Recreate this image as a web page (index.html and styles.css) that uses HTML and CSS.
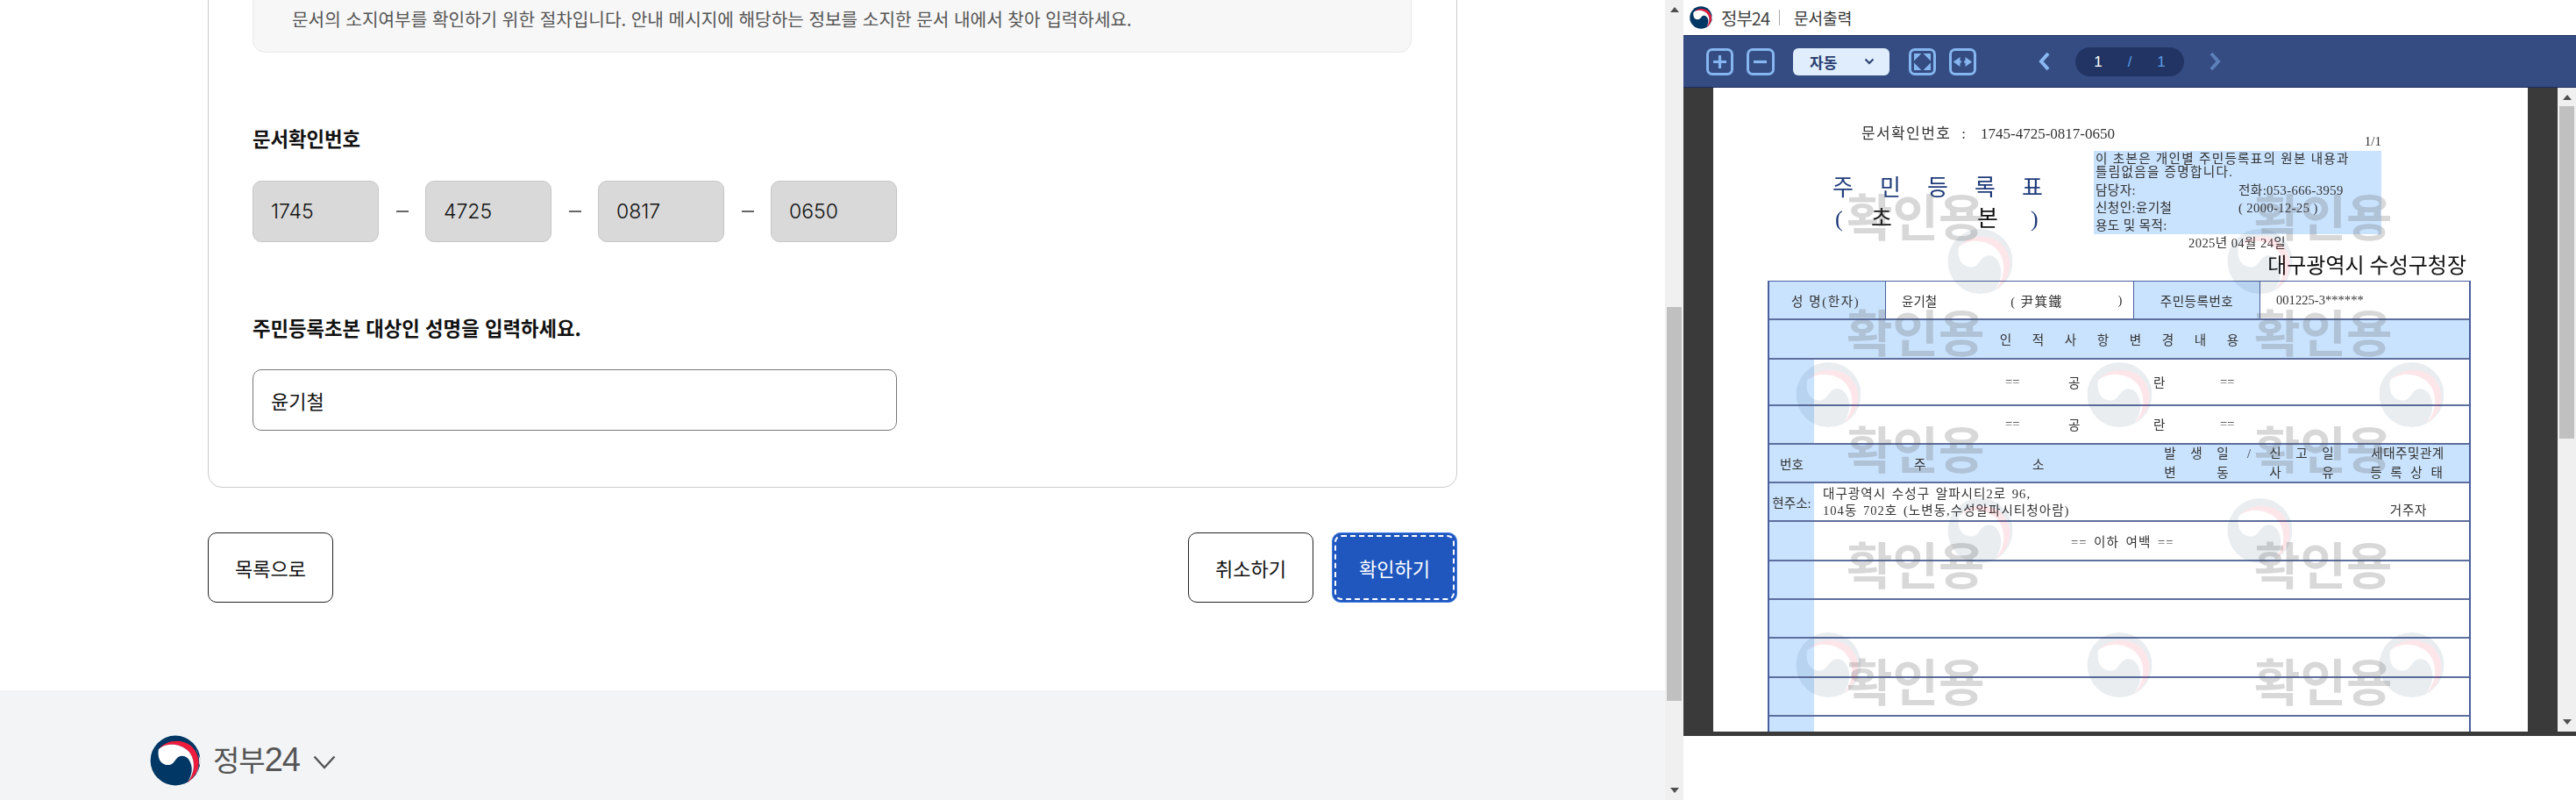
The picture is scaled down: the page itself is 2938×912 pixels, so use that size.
FILE: index.html
```html
<!DOCTYPE html>
<html lang="ko">
<head>
<meta charset="utf-8">
<title>문서확인</title>
<link rel="stylesheet" href="styles.css">
</head>
<body>
<svg class="defs" width="0" height="0" aria-hidden="true">
  <defs>
    <symbol id="taegeuk" viewBox="0 0 100 100">
      <circle cx="50" cy="50" r="50" fill="#fff"/>
      <circle cx="50" cy="50" r="49" fill="#003764"/>
      <path fill="#fff" d="M73 97C96 82 104 50 90 26L100 50 88 84Z"/>
      <path fill="#ed1c3c" d="M17 28C32 9 62 6 82 22 100 40 104 72 73 94 90 74 90 48 76 32 60 16 32 14 17 28Z"/>
      <path fill="#fff" d="M17 28C32 14 60 16 76 32 90 48 90 74 73 94 82 80 84 68 81 58 78 46 70 40 62 41 52 42 50 52 44 56 36 62 22 58 18 46 16 40 16 34 17 28Z"/>
    </symbol>
    <mask id="wm-cut">
      <rect width="100" height="100" fill="#fff"/>
      <path fill="#000" d="M17 28C32 9 62 6 82 22 100 40 104 72 73 94 82 80 84 68 81 58 78 46 70 40 62 41 52 42 50 52 44 56 36 62 22 58 18 46 16 40 16 34 17 28Z"/>
    </mask>
    <symbol id="wm-seal" viewBox="0 0 100 100">
      <circle cx="50" cy="50" r="50" fill="#1d4468" opacity=".09" mask="url(#wm-cut)"/>
      <path fill="#ed1c3c" opacity=".11" d="M17 28C32 9 62 6 82 22 100 40 104 72 73 94 90 74 90 48 76 32 60 16 32 14 17 28Z"/>
    </symbol>
  </defs>
</svg>

<div class="app">
  <section class="site">
    <div class="site-scroll">
      <main class="site-main">
        <div class="card">
          <div class="notice">문서의 소지여부를 확인하기 위한 절차입니다. 안내 메시지에 해당하는 정보를 소지한 문서 내에서 찾아 입력하세요.</div>
          <h2 class="field-label">문서확인번호</h2>
          <div class="code-row">
            <div class="code-box">1745</div><span class="code-dash"></span>
            <div class="code-box">4725</div><span class="code-dash"></span>
            <div class="code-box">0817</div><span class="code-dash"></span>
            <div class="code-box">0650</div>
          </div>
          <h2 class="field-label second">주민등록초본 대상인 성명을 입력하세요.</h2>
          <div class="name-input">윤기철</div>
        </div>
        <div class="actions">
          <button class="btn" type="button">목록으로</button>
          <div class="actions-right">
            <button class="btn" type="button">취소하기</button>
            <button class="btn btn-primary" type="button"><span class="focus-ring">확인하기</span></button>
          </div>
        </div>
      </main>
      <footer class="site-footer">
        <svg class="footer-logo"><use href="#taegeuk"/></svg>
        <span class="footer-name"><span class="footer-ko">정부</span>24</span>
        <svg class="footer-chevron" viewBox="0 0 26 16"><path d="M1.5 1.5 13 14 24.5 1.5" fill="none" stroke="#555" stroke-width="2.4"/></svg>
      </footer>
    </div>
    <div class="scrollbar">
      <span class="arrow-up"></span>
      <div class="scroll-space main-space"><div class="thumb main-thumb"></div></div>
      <span class="arrow-down"></span>
    </div>
  </section>

  <section class="viewer">
    <header class="viewer-head">
      <svg class="head-logo"><use href="#taegeuk"/></svg>
      <span class="head-name">정부24</span>
      <span class="head-sep"></span>
      <span class="head-title">문서출력</span>
    </header>
    <div class="toolbar">
      <span class="tool"><svg viewBox="0 0 25 25"><path d="M12.5 5v15M5 12.5h15"/></svg></span>
      <span class="tool tool-minus"><svg viewBox="0 0 25 25"><path d="M5 12.5h15"/></svg></span>
      <span class="zoom-select"><b>자동</b><svg viewBox="0 0 12 8"><path d="M1.5 1.5 6 6l4.500-4.500"/></svg></span>
      <span class="tool tool-fit"><svg class="thin" viewBox="0 0 25 25"><path d="M4 9V4h5L4 9ZM21 9V4h-5l5 5ZM4 16v5h5l-5-5ZM21 16v5h-5l5-5Z"/></svg></span>
      <span class="tool tool-width"><svg class="thin" viewBox="0 0 25 25"><path d="M8.500 9 3.500 12.500l5 3.500ZM16.500 9l5 3.500-5 3.500Z"/><path d="M8 12.500h3M14 12.500h3"/></svg></span>
      <svg class="pager-arrow prev" viewBox="0 0 14 22"><path d="M11 2 3 11l8 9"/></svg>
      <div class="pager"><span class="cur">1</span><span class="of">/</span><span class="of">1</span></div>
      <svg class="pager-arrow next" viewBox="0 0 14 22"><path d="M3 2l8 9-8 9"/></svg>
    </div>
    <div class="stage">
      <div class="page">
        <div class="doc">
          <div class="doc-no-row">
            <span class="doc-no"><span class="doc-no-key">문서확인번호</span><span class="doc-no-colon">:</span><span>1745-4725-0817-0650</span></span>
            <span class="doc-pages">1/1</span>
          </div>
          <div class="doc-top">
            <div class="doc-title">
              <div class="title-main"><span>주</span><span>민</span><span>등</span><span>록</span><span>표</span></div>
              <div class="title-sub"><span class="paren">(</span><span class="kind">초</span><span class="kind">본</span><span class="paren">)</span></div>
            </div>
            <div class="cert">
              <div class="cert-line tight">이 초본은 개인별 주민등록표의 원본 내용과</div>
              <div class="cert-line tight">틀림없음을 증명합니다.</div>
              <div class="cert-pair first"><span>담당자:</span><span>전화:053-666-3959</span></div>
              <div class="cert-pair"><span>신청인:윤기철</span><span>( 2000-12-25 )</span></div>
              <div class="cert-pair"><span>용도 및 목적:</span><span></span></div>
            </div>
          </div>
          <div class="doc-date">2025년 04월 24일</div>
          <div class="doc-issuer">대구광역시 수성구청장</div>

          <div class="tbl">
            <div class="row row-id">
              <div class="c blue c-label">성 명(한자)</div>
              <div class="c c-name"><span>윤기철</span><span class="hanja">( 尹箕鐵</span><span class="close">)</span></div>
              <div class="c blue c-center">주민등록번호</div>
              <div class="c c-rrn">001225-3******</div>
            </div>
            <div class="row row-band blue">
              <span>인</span><span>적</span><span>사</span><span>항</span><span>변</span><span>경</span><span>내</span><span>용</span>
            </div>
            <div class="row row-tall row-side">
              <div class="side blue"></div>
              <div class="blank"><span>==</span><span>공</span><span>란</span><span>==</span></div>
            </div>
            <div class="row row-side">
              <div class="side blue"></div>
              <div class="blank"><span>==</span><span>공</span><span>란</span><span>==</span></div>
            </div>
            <div class="row row-head blue">
              <div class="h-no">번호</div>
              <div class="h-addr"><span>주</span><span>소</span></div>
              <div class="h-date">
                <span>발</span><span>생</span><span>일</span><span>/</span><span>신</span><span>고</span><span>일</span>
                <span>변</span><span></span><span>동</span><span></span><span>사</span><span></span><span>유</span>
              </div>
              <div class="h-status"><div>세대주및관계</div><div class="spaced">등 록 상 태</div></div>
            </div>
            <div class="row row-addr">
              <div class="side blue side-label">현주소:</div>
              <div class="addr-lines"><div>대구광역시 수성구 알파시티2로 96,</div><div>104동 702호 (노변동,수성알파시티청아람)</div></div>
              <div class="addr-status">거주자</div>
            </div>
            <div class="row row-side">
              <div class="side blue"></div>
              <div class="end-mark">== 이하 여백 ==</div>
            </div>
            <div class="row row-side"><div class="side blue"></div></div>
            <div class="row row-side"><div class="side blue"></div></div>
            <div class="row row-side"><div class="side blue"></div></div>
            <div class="row row-side"><div class="side blue"></div></div>
            <div class="row row-side"><div class="side blue"></div></div>
          </div>
        </div>

        <svg class="wm-seal s1"><use href="#wm-seal"/></svg>
        <svg class="wm-seal s2"><use href="#wm-seal"/></svg>
        <svg class="wm-seal s3"><use href="#wm-seal"/></svg>
        <svg class="wm-seal s4"><use href="#wm-seal"/></svg>
        <svg class="wm-seal s5"><use href="#wm-seal"/></svg>
        <svg class="wm-seal s6"><use href="#wm-seal"/></svg>
        <svg class="wm-seal s7"><use href="#wm-seal"/></svg>
        <svg class="wm-seal s8"><use href="#wm-seal"/></svg>
        <svg class="wm-seal s9"><use href="#wm-seal"/></svg>
        <svg class="wm-seal s10"><use href="#wm-seal"/></svg>
        <span class="wm w1">확인용</span><span class="wm w2">확인용</span>
        <span class="wm w3">확인용</span><span class="wm w4">확인용</span>
        <span class="wm w5">확인용</span><span class="wm w6">확인용</span>
        <span class="wm w7">확인용</span><span class="wm w8">확인용</span>
        <span class="wm w9">확인용</span><span class="wm w10">확인용</span>
      </div>
      <div class="dark-gutter"></div>
      <div class="scrollbar">
        <span class="arrow-up"></span>
        <div class="scroll-space"><div class="thumb pdf-thumb"></div></div>
        <span class="arrow-down"></span>
      </div>
    </div>
    <div class="stage-foot"></div>
  </section>
</div>
</body>
</html>
```

FILE: styles.css
```css
* { box-sizing: border-box; }
html, body { margin: 0; padding: 0; background: #fff; }
body { font-family: "Noto Sans CJK KR", "Noto Sans", sans-serif; color: #111; overflow: hidden; }
.defs { position: absolute; }
.app { display: flex; width: 2938px; height: 912px; overflow: hidden; }

/* left site */
.site { width: 1920px; height: 912px; display: flex; flex: none; }
.site-scroll { width: 1899px; height: 912px; overflow: hidden; flex: none; }
.site-main { padding: 0 237px; margin-top: -100px; width: 1899px; }
.card { width: 1425px; padding: 59px 51px 64px 50px; border: 1px solid #ccc; border-radius: 16px; }
.notice { height: 100px; background: #f7f7f7; border: 1px solid #e8e8e8; border-radius: 14px; padding: 46px 0 0 44px; font-size: 20.2px; line-height: 30px; color: #555; }
.field-label { margin: 82px 0 34px; font-size: 22.3px; line-height: 30px; font-weight: 700; color: #111; }
.field-label.second { margin-bottom: 33px; }
.code-row { display: flex; align-items: center; }
.code-box { width: 144px; height: 70px; background: #d9d9d9; border: 1px solid #c6c6c6; border-radius: 10px; padding-left: 20px; font-size: 23px; line-height: 68px; color: #111; font-family: "Inter", "Noto Sans CJK KR", sans-serif; font-weight: 300; }
.code-dash { width: 53px; display: flex; justify-content: center; }
.code-dash::before { content: ""; width: 14px; height: 2px; background: #666; }
.name-input { width: 735px; height: 70px; border: 1px solid #777; border-radius: 10px; padding-left: 20px; font-size: 22px; line-height: 68px; color: #111; }
.actions { width: 1425px; margin-top: 51px; display: flex; justify-content: space-between; }
.actions-right { display: flex; gap: 21px; }
.btn { width: 143px; height: 80px; padding: 0; background: #fff; border: 1px solid #222; border-radius: 10px; font: 400 22px "Noto Sans CJK KR", sans-serif; color: #111; }
.btn-primary { padding: 2px; background: #1f57bf; border-color: #3a78e0; color: #fff; }
.focus-ring { display: flex; align-items: center; justify-content: center; height: 100%; border: 2px dashed #fff; border-radius: 8px; }
.site-footer { margin-top: 100px; height: 125px; background: #f3f4f6; display: flex; align-items: center; padding: 35px 0 0 171px; }
.footer-logo { width: 58px; height: 58px; flex: none; }
.footer-name { margin-left: 14px; font-size: 38px; line-height: 50px; letter-spacing: -1px; color: #555; font-family: "Liberation Sans", "Noto Sans CJK KR", sans-serif; white-space: nowrap; }
.footer-ko { font-size: 33px; }
.footer-chevron { width: 26px; height: 16px; margin: 4px 0 0 15px; }

/* scrollbars */
.scrollbar { width: 21px; height: 100%; flex: none; background: #f0f0f0; display: flex; flex-direction: column; align-items: center; }
.arrow-up, .arrow-down { width: 0; height: 0; flex: none; border-left: 5px solid transparent; border-right: 5px solid transparent; }
.arrow-up { margin: 8px 0 7px; border-bottom: 6px solid #505050; }
.arrow-down { margin: 7px 0 8px; border-top: 6px solid #505050; }
.scroll-space { flex: 1; width: 17px; }
.thumb { width: 17px; background: #c0c0c0; }
.main-thumb { height: 449px; margin-top: 329px; }
.pdf-thumb { height: 379px; }

/* viewer */
.viewer { width: 1018px; flex: none; display: flex; flex-direction: column; }
.viewer-head { height: 40px; display: flex; align-items: center; padding-left: 7px; background: #fff; }
.head-logo { width: 26px; height: 26px; flex: none; }
.head-name { margin-left: 10px; font-size: 20px; letter-spacing: -1px; color: #444; }
.head-sep { width: 1px; height: 18px; margin: 0 16px 0 11px; background: #aaa; }
.head-title { font-size: 18px; color: #333; }
.toolbar { height: 60px; background: #344c82; border-top: 1px solid #1d2f60; border-bottom: 1px solid #1d2f60; display: flex; align-items: center; padding-left: 26px; flex: none; }
.tool { width: 31px; height: 31px; border: 3px solid #86b6f0; border-radius: 7px; display: flex; flex: none; }
.tool svg { width: 25px; height: 25px; fill: none; stroke: #86b6f0; stroke-width: 3.2; }
.tool svg.thin { stroke-width: 2; }
.tool-fit svg { fill: #86b6f0; stroke-width: 1; }
.tool-width svg { fill: #86b6f0; stroke-width: 1.6; }
.tool-minus { margin-left: 15px; width: 32px; }
.zoom-select { width: 110px; height: 31px; margin-left: 21px; background: #e0edfc; border-radius: 6px; display: flex; align-items: center; padding-left: 19px; }
.zoom-select b { font-size: 17px; line-height: 31px; font-weight: 700; color: #2b3f70; width: 57px; }
.zoom-select svg { width: 12px; height: 8px; margin-left: 5px; fill: none; stroke: #2b3f70; stroke-width: 2; }
.tool-fit { margin-left: 22px; }
.tool-width { margin-left: 15px; }
.pager-arrow { width: 14px; height: 22px; flex: none; fill: none; stroke-width: 4; }
.prev { margin-left: 71px; stroke: #8ab8f2; }
.next { margin-left: 28px; stroke: #5d7fb8; }
.pager { width: 124px; height: 33px; margin-left: 28px; border-radius: 17px; background: #223463; display: grid; grid-template-columns: repeat(3, 36px); justify-content: center; justify-items: center; font: 400 17px/33px "Liberation Sans", sans-serif; }
.cur { color: #fff; }
.of { color: #5c9be8; }

.stage { height: 734px; background: #3a3a3a; display: flex; justify-content: flex-end; flex: none; }
.stage-foot { height: 5px; background: #3a3a3a; flex: none; }
.page { position: relative; width: 929px; height: 734px; background: #fff; overflow: hidden; flex: none; }
.dark-gutter { width: 34px; flex: none; }

/* document */
.doc { width: 929px; padding-top: 43px; font-family: "Liberation Serif", "Noto Sans CJK KR", serif; font-size: 14.6px; color: #333; filter: blur(.35px); }
.doc-no-row { width: 762px; height: 29px; padding-left: 169px; display: flex; justify-content: space-between; }
.doc-no { font-size: 17px; line-height: 20px; display: flex; }
.doc-no-key { letter-spacing: 1.4px; }
.doc-no-colon { margin: 0 17px 0 12px; }
.doc-pages { font-size: 15px; line-height: 20px; margin-top: 8px; }
.doc-top { display: flex; height: 95px; }
.doc-title { width: 434px; padding: 25px 0 0 136px; color: #1f3a7a; }
.title-main { display: flex; font-size: 26px; line-height: 35px; }
.title-main span { width: 54px; }
.title-sub { display: flex; font-size: 26px; line-height: 35px; padding-left: 3px; }
.paren { width: 41px; }
.kind { color: #111; width: 121px; }
.kind + .kind { width: 61px; }
.cert { width: 328px; background: #c9e2fd; padding: 2px 0 0 2px; }
.cert-line.tight { line-height: 15px; height: 15px; letter-spacing: 1.3px; white-space: nowrap; }
.cert-pair { display: grid; grid-template-columns: 163px 1fr; height: 20px; line-height: 20px; white-space: nowrap; letter-spacing: .4px; }
.cert-pair.first { margin-top: 3px; }
.doc-date { height: 20px; line-height: 20px; margin-left: 542px; letter-spacing: .4px; }
.doc-issuer { height: 33px; line-height: 33px; padding-right: 70px; text-align: right; font-size: 24px; color: #111; }

.tbl { margin-left: 62px; width: 802px; border-left: 2px solid #4a5f9c; border-right: 2px solid #4a5f9c; border-top: 1px solid #4a5f9c; }
.row { height: 44.3px; border-bottom: 2px solid #5d6f9f; display: flex; align-items: center; }
.row-tall { height: 53px; }
.blue { background: #c9e2fd; }
.row-id { display: grid; grid-template-columns: 133px 283px 144px 1fr; align-items: stretch; }
.c { display: flex; align-items: center; border-right: 1px solid #4a5f9c; }
.c-label { padding-left: 25px; letter-spacing: 1.6px; white-space: pre; }
.c-name { padding-left: 18px; }
.c-name .hanja { margin-left: 84px; letter-spacing: 1.4px; }
.c-name .close { margin-left: 63px; }
.c-center { justify-content: center; letter-spacing: .5px; }
.c-rrn { padding-left: 18px; border-right: 0; }
.row-band { padding-left: 251px; }
.row-band span { width: 37px; text-align: center; }
.row-side { align-items: stretch; }
.side { width: 51px; flex: none; }
.side-label { display: flex; align-items: center; justify-content: center; white-space: nowrap; }
.blank { display: grid; grid-template-columns: 72px 97px 76px 1fr; align-items: center; padding-left: 218px; flex: 1; }
.row-head .h-no { width: 51px; text-align: center; flex: none; }
.h-addr { width: 391px; flex: none; padding-left: 114px; display: flex; }
.h-addr span:first-child { width: 135px; }
.h-date { width: 209px; flex: none; display: grid; grid-template-columns: repeat(7, 30px); justify-items: center; line-height: 22px; }
.h-status { flex: 1; text-align: center; padding-left: 7px; line-height: 22px; letter-spacing: .5px; }
.spaced { letter-spacing: 3px; }
.row-addr { align-items: stretch; }
.addr-lines { width: 388px; padding: 2px 0 0 10px; flex: none; display: flex; flex-direction: column; justify-content: center; line-height: 19.5px; white-space: nowrap; letter-spacing: 1px; word-spacing: 2px; }
.addr-status { width: 368px; text-align: center; padding-left: 212px; flex: none; align-self: flex-end; line-height: 22px; letter-spacing: .8px; }
.end-mark { padding-left: 293px; align-self: center; white-space: pre; letter-spacing: 1px; word-spacing: 3px; }

/* overlay watermarks */
.wm { position: absolute; font: 700 57px/1 "Noto Sans CJK KR", sans-serif; color: rgba(90, 90, 90, .24); white-space: nowrap; }
.w1, .w3, .w5, .w7, .w9 { left: 152px; }
.w2, .w4, .w6, .w8, .w10 { left: 617px; }
.w1, .w2 { top: 116px; }
.w3, .w4 { top: 248px; }
.w5, .w6 { top: 381px; }
.w7, .w8 { top: 513px; }
.w9, .w10 { top: 646px; }
.wm-seal { position: absolute; width: 77px; height: 74px; }
.s1 { left: 266px; top: 161px; }
.s2 { left: 585px; top: 161px; }
.s3 { left: 93px; top: 313px; }
.s4 { left: 425px; top: 313px; }
.s5 { left: 758px; top: 313px; }
.s6 { left: 266px; top: 468px; }
.s7 { left: 585px; top: 468px; }
.s8 { left: 93px; top: 621px; }
.s9 { left: 425px; top: 621px; }
.s10 { left: 758px; top: 621px; }
```
